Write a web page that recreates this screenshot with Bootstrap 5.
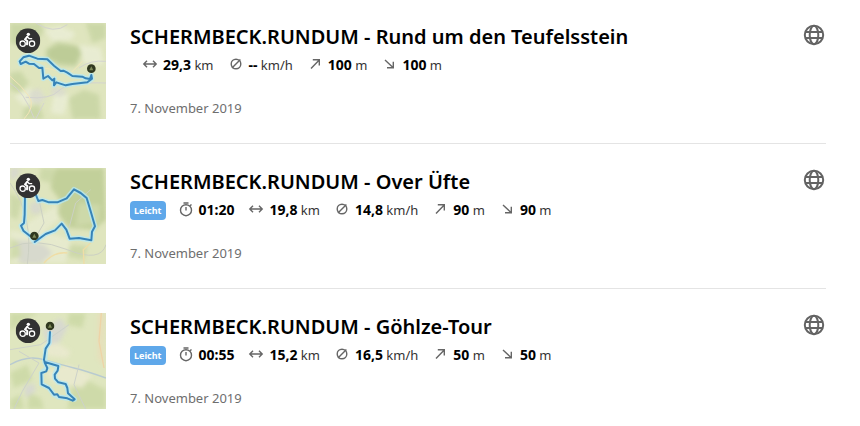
<!DOCTYPE html>
<html lang="de">
<head>
<meta charset="utf-8">
<meta name="viewport" content="width=device-width, initial-scale=1">
<title>Touren</title>
<link rel="stylesheet" href="https://cdn.jsdelivr.net/npm/bootstrap@5.3.0/dist/css/bootstrap.min.css">
<style>
body{font-family:"Noto Sans","Open Sans",sans-serif;color:#000;background:#fff}
.tour-list{padding:0 34px 0 10px;margin-top:-1px}
.tour{gap:24px;padding:24px 0;border-bottom:1px solid #e4e4e4}
.tour:last-child{border-bottom:0}
.map-thumb{width:96px;height:96px}
.tour-title{font-size:20px;line-height:28px;font-weight:600}
.tour-title a{color:#000}
.stats{font-size:13px;line-height:28px;color:#333;min-height:28px}
.stats b{font-size:14px;font-weight:700;color:#000}
.stat{padding-left:12px;margin-right:2px;gap:5px}
.stat svg{width:16px;height:16px}
.line-icon{fill:none;stroke:#666;stroke-width:1.4}
.level{background:#5fa8ea;color:#fff;font-size:9px;line-height:19px;height:19px;padding:0 4px;border-radius:4px;font-weight:700}
.tour-date{font-size:13px;line-height:20px;color:#6e6e6e;margin-top:19px}
.globe-btn{width:24px;height:24px}
.globe-btn svg{width:24px;height:24px;fill:none;stroke:#636363;stroke-width:2}
.route{fill:none;stroke:#3683b8;stroke-width:6;stroke-linejoin:round;stroke-linecap:round}
.halo{fill:none;stroke:#b4e8f6;stroke-width:15;stroke-linejoin:round;opacity:.75}
.terrain{opacity:.75}
</style>
<script src="https://cdn.jsdelivr.net/npm/bootstrap@5.3.0/dist/js/bootstrap.bundle.min.js"></script>
</head>
<body>
<svg class="d-none" aria-hidden="true">
  <defs>
    <filter id="soft" x="-30%" y="-30%" width="160%" height="160%"><feGaussianBlur stdDeviation="6"/></filter>
  </defs>
  <symbol id="bike" viewBox="0 0 74 74">
    <circle cx="37" cy="37" r="37" fill="#323232"/>
    <g fill="none" stroke="#fff" stroke-width="3.8" stroke-linecap="round" stroke-linejoin="round">
      <circle cx="21" cy="46" r="8"/><circle cx="49" cy="46" r="8"/>
      <path stroke-width="6" d="M35 25 L28 33 L35 38 L34 48"/>
      <path stroke-width="4" d="M35 25 L41 31 L48 31"/>
    </g>
    <circle cx="38" cy="18" r="5" fill="#fff"/>
  </symbol>
  <symbol id="pin" viewBox="0 0 28 28">
    <circle cx="14" cy="14" r="13" fill="#30381f"/>
    <path d="M14 7 L20 19 H8Z" fill="#7e8a5a"/>
  </symbol>
  <symbol id="distance" viewBox="0 0 16 16"><path class="line-icon" d="M2 7H14M5 3.8L1.8 7L5 10.2M11 3.8L14.2 7L11 10.2"/></symbol>
  <symbol id="average" viewBox="0 0 16 16"><circle class="line-icon" cx="8" cy="7" r="4.8"/><path class="line-icon" d="M4 11L12.4 2.6"/></symbol>
  <symbol id="ascent" viewBox="0 0 16 16"><path class="line-icon" d="M4 11.5L12 3.2M5.8 2.8H12.3V8.6"/></symbol>
  <symbol id="descent" viewBox="0 0 16 16"><path class="line-icon" d="M4 3L12 10.5M12.3 4.8V10.8H6"/></symbol>
  <symbol id="clock" viewBox="0 0 16 16"><circle class="line-icon" cx="8" cy="8.2" r="5.5"/><path class="line-icon" d="M5.5 1H10.5M8 5V8.5M12 3.8L13.5 2.4"/></symbol>
  <symbol id="globe" viewBox="0 0 24 24"><circle cx="12" cy="12" r="9.2"/><ellipse cx="12" cy="12" rx="4.3" ry="9.2"/><path d="M3.5 9H20.5M3.5 15H20.5"/></symbol>
</svg>

<main class="tour-list">
  <article class="tour d-flex">
    <svg class="map-thumb flex-shrink-0" viewBox="18 15 288 288" role="img" aria-label="Karte">
      <rect x="18" y="15" width="288" height="288" fill="#dfe5be"/>
      <g class="terrain" filter="url(#soft)">
        <path fill="#c5d3a0" d="M18 15H110L120 40L80 90L18 75ZM125 95L160 70L205 80L228 110L215 148L170 145L125 125ZM245 15H306V60L265 75ZM18 165L50 160L75 195L45 225L18 215ZM195 240L240 215L285 230L290 303H205ZM60 270L105 260L120 303H55Z"/>
        <path fill="#b2c48b" d="M130 95L165 80L220 84L232 105L218 138L170 136L132 118Z"/>
        <path fill="#ecefd9" d="M120 35L170 25L215 45L200 65L145 70ZM225 80L290 90L300 140L240 135ZM30 235L80 210L105 245L60 265ZM150 225L195 230L180 290L140 285Z"/>
        <path fill="#d9d9d2" d="M75 222L105 210L125 240L105 260L80 250ZM145 205L190 215L175 235L140 230Z"/>
      </g>
      <path fill="none" stroke="#d3d3cf" stroke-width="3" d="M18 195Q60 220 90 300M65 238Q140 245 165 218T306 195M95 15Q150 50 190 20M225 150Q260 125 306 130M120 255L95 303"/>
      <path fill="none" stroke="#f2e5b8" stroke-width="3" d="M18 175Q55 205 75 235T60 303M120 150L200 165L235 130"/>
      <path class="halo" d="M262 171L258 183L245 181L235 176L205 174L190 164L178 158L170 159L150 143L130 124L100 122L75 113L58 118L47 130L50 138L65 131L90 138L115 149L118 182L132 174L145 187L151 182L150 202L157 193L185 202L205 198L250 193L264 182Z"/>
      <path class="route" d="M262 171L258 183L245 181L235 176L205 174L190 164L178 158L170 159L150 143L130 124L100 122L75 113L58 118L47 130L50 138L65 131L75 137L90 138L105 150L115 149L118 182L132 174L145 187L151 182L150 202L157 193L185 202L205 198L250 193L264 182Z"/>
      <use href="#pin" x="248" y="138" width="28" height="28"/>
      <use href="#bike" x="35" y="31" width="74" height="74"/>
    </svg>
    <div class="flex-grow-1">
      <h2 class="tour-title mb-0"><a class="text-decoration-none" href="#">SCHERMBECK.RUNDUM - Rund um den Teufelsstein</a></h2>
      <div class="stats d-flex flex-wrap align-items-center">
        <span class="stat d-flex align-items-center"><svg><use href="#distance"/></svg><span><b>29,3</b> km</span></span>
        <span class="stat d-flex align-items-center"><svg><use href="#average"/></svg><span><b>--</b> km/h</span></span>
        <span class="stat d-flex align-items-center"><svg><use href="#ascent"/></svg><span><b>100</b> m</span></span>
        <span class="stat d-flex align-items-center"><svg><use href="#descent"/></svg><span><b>100</b> m</span></span>
      </div>
      <p class="tour-date mb-0">7. November 2019</p>
    </div>
    <button class="globe-btn btn border-0 p-0 d-flex" type="button" aria-label="Öffentlich"><svg><use href="#globe"/></svg></button>
  </article>

  <article class="tour d-flex">
    <svg class="map-thumb flex-shrink-0" viewBox="18 15 288 288" role="img" aria-label="Karte">
      <rect x="18" y="15" width="288" height="288" fill="#dfe5be"/>
      <g class="terrain" filter="url(#soft)">
        <path fill="#b9c98f" d="M150 15H300L306 170L270 200L195 195L160 150L170 115L140 75Z"/>
        <path fill="#c8d5a3" d="M110 15H160L140 60L105 50ZM225 120L290 125L285 180L215 190ZM18 90L55 110L40 170L18 160ZM200 245L250 250L240 290L190 280Z"/>
        <path fill="#e9ecd3" d="M18 200L60 210L70 180L160 125L165 170L120 205L200 230L185 300H18Z"/>
        <path fill="#d5d5d2" d="M35 230L75 235L120 245L145 270L110 303H50L30 265ZM75 125L105 110L115 150L85 155ZM18 15H50L40 45L18 50Z"/>
        <path fill="#ccd8a8" d="M20 225L45 240L50 280L18 290Z"/>
      </g>
      <path fill="none" stroke="#ccd0c3" stroke-width="3" d="M18 60Q90 160 70 303M18 255Q90 220 190 260T306 245M105 110L120 180L85 240M195 195L215 120L260 80"/>
      <path fill="none" stroke="#efdda6" stroke-width="4" d="M240 303L238 260L265 235M120 300Q150 265 190 270"/>
      <path class="halo" d="M63 95L62 155L60 180L51 188L58 203L78 219L92 237L125 213L153 202L173 182L187 200L197 227L225 225L262 232L264 206L273 190L260 145L248 105L230 90L210 79L188 106L160 118L135 118L115 111L103 114L96 96"/>
      <path class="route" d="M63 95L62 155L60 180L51 188L58 203L78 219M92 237L125 213L153 202L173 182L187 200L197 227L225 225L262 232L264 206L273 190L260 145L248 105L230 90L210 79L188 106L160 118L135 118L115 111L103 114L96 96"/>
      <use href="#pin" x="77" y="205" width="28" height="28"/>
      <use href="#bike" x="35" y="31" width="74" height="74"/>
    </svg>
    <div class="flex-grow-1">
      <h2 class="tour-title mb-0"><a class="text-decoration-none" href="#">SCHERMBECK.RUNDUM - Over Üfte</a></h2>
      <div class="stats d-flex flex-wrap align-items-center">
        <span class="level">Leicht</span>
        <span class="stat d-flex align-items-center"><svg><use href="#clock"/></svg><b>01:20</b></span>
        <span class="stat d-flex align-items-center"><svg><use href="#distance"/></svg><span><b>19,8</b> km</span></span>
        <span class="stat d-flex align-items-center"><svg><use href="#average"/></svg><span><b>14,8</b> km/h</span></span>
        <span class="stat d-flex align-items-center"><svg><use href="#ascent"/></svg><span><b>90</b> m</span></span>
        <span class="stat d-flex align-items-center"><svg><use href="#descent"/></svg><span><b>90</b> m</span></span>
      </div>
      <p class="tour-date mb-0">7. November 2019</p>
    </div>
    <button class="globe-btn btn border-0 p-0 d-flex" type="button" aria-label="Öffentlich"><svg><use href="#globe"/></svg></button>
  </article>

  <article class="tour d-flex">
    <svg class="map-thumb flex-shrink-0" viewBox="18 15 288 288" role="img" aria-label="Karte">
      <rect x="18" y="15" width="288" height="288" fill="#dfe6bf"/>
      <g class="terrain" filter="url(#soft)">
        <path fill="#c9d7a2" d="M18 15H105L60 35L18 70ZM195 15H245L235 60L190 50ZM18 195L70 170L85 215L30 240ZM205 235L255 220L306 245V303H190ZM75 255L110 270L120 303H70ZM18 275L50 260L60 303H18Z"/>
        <path fill="#d5d5d5" d="M115 65L170 30L190 60L165 105L130 115ZM60 235L90 225L95 250L65 270Z"/>
        <path fill="#ecead2" d="M125 195L190 170L265 200L235 240L190 230L150 225ZM105 110L160 105L200 130L190 150L135 145Z"/>
        <path fill="#e9ddb9" d="M280 15H303L298 175L280 150Z"/>
      </g>
      <path fill="none" stroke="#b8cad0" stroke-width="4" d="M18 170Q70 140 120 155T210 180T306 210"/>
      <path fill="none" stroke="#cdd2ca" stroke-width="3" d="M45 130L105 165L55 250L30 303M225 170L210 230L245 303M18 125L110 110L195 50"/>
      <path fill="none" stroke="#eed3a6" stroke-width="4" d="M292 15L285 100L300 180"/>
      <path class="halo" d="M138 72L136 105L125 122L122 162L163 174L152 200L153 212L163 223L185 228L194 258L212 274L190 271L165 267L150 260L135 240L113 229L112 195L130 180L122 162"/>
      <path class="route" d="M138 72L136 105L125 122L120 155L122 162L163 174L161 188L152 200L153 212L163 223L185 228L190 240L192 256L212 274L206 278L190 271L165 267L160 259L150 260L135 240L113 229L112 195L127 190L130 180L122 164"/>
      <use href="#pin" x="124" y="40" width="28" height="28"/>
      <use href="#bike" x="35" y="31" width="74" height="74"/>
    </svg>
    <div class="flex-grow-1">
      <h2 class="tour-title mb-0"><a class="text-decoration-none" href="#">SCHERMBECK.RUNDUM - Göhlze-Tour</a></h2>
      <div class="stats d-flex flex-wrap align-items-center">
        <span class="level">Leicht</span>
        <span class="stat d-flex align-items-center"><svg><use href="#clock"/></svg><b>00:55</b></span>
        <span class="stat d-flex align-items-center"><svg><use href="#distance"/></svg><span><b>15,2</b> km</span></span>
        <span class="stat d-flex align-items-center"><svg><use href="#average"/></svg><span><b>16,5</b> km/h</span></span>
        <span class="stat d-flex align-items-center"><svg><use href="#ascent"/></svg><span><b>50</b> m</span></span>
        <span class="stat d-flex align-items-center"><svg><use href="#descent"/></svg><span><b>50</b> m</span></span>
      </div>
      <p class="tour-date mb-0">7. November 2019</p>
    </div>
    <button class="globe-btn btn border-0 p-0 d-flex" type="button" aria-label="Öffentlich"><svg><use href="#globe"/></svg></button>
  </article>
</main>
</body>
</html>
